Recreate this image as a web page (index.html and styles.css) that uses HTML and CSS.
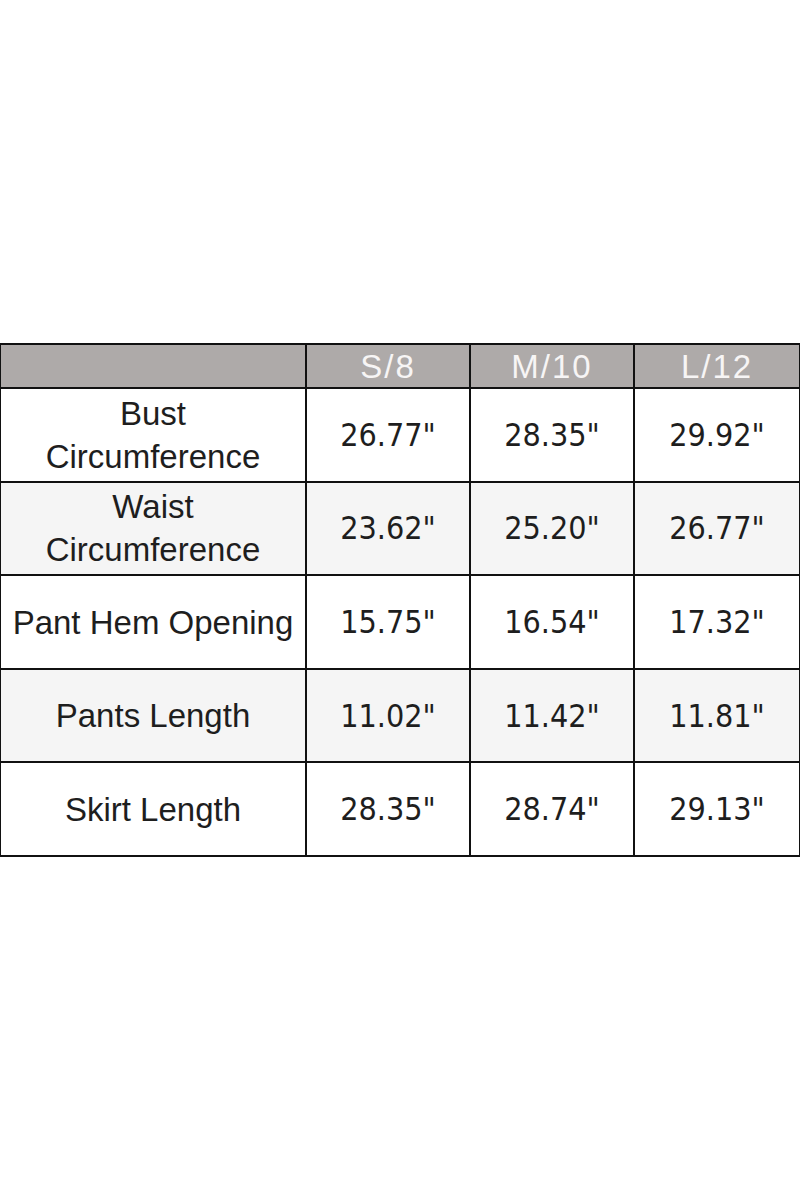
FILE: index.html
```html
<!DOCTYPE html>
<html>
<head>
<meta charset="utf-8">
<link rel="stylesheet" href="styles.css">
</head>
<body>
<div class="page">
  <table class="size-table">
    <colgroup>
      <col class="c-label">
      <col class="c-size">
      <col class="c-size">
      <col class="c-last">
    </colgroup>
    <thead>
      <tr class="head-row">
        <th></th>
        <th>S/8</th>
        <th>M/10</th>
        <th>L/12</th>
      </tr>
    </thead>
    <tbody>
      <tr>
        <td class="label">Bust<br>Circumference</td>
        <td class="num">26.77"</td>
        <td class="num">28.35"</td>
        <td class="num">29.92"</td>
      </tr>
      <tr class="alt">
        <td class="label">Waist<br>Circumference</td>
        <td class="num">23.62"</td>
        <td class="num">25.20"</td>
        <td class="num">26.77"</td>
      </tr>
      <tr>
        <td class="label">Pant Hem Opening</td>
        <td class="num">15.75"</td>
        <td class="num">16.54"</td>
        <td class="num">17.32"</td>
      </tr>
      <tr class="alt">
        <td class="label">Pants Length</td>
        <td class="num">11.02"</td>
        <td class="num">11.42"</td>
        <td class="num">11.81"</td>
      </tr>
      <tr>
        <td class="label">Skirt Length</td>
        <td class="num">28.35"</td>
        <td class="num">28.74"</td>
        <td class="num">29.13"</td>
      </tr>
    </tbody>
  </table>
</div>
</body>
</html>
```

FILE: styles.css
```css
html, body {
  margin: 0;
  padding: 0;
  background: #ffffff;
}

.page {
  width: 800px;
  height: 1200px;
  display: flex;
  align-items: center;
  justify-content: center;
}

.size-table {
  width: 800px;
  table-layout: fixed;
  border-collapse: collapse;
  font-family: "Liberation Sans", Arial, sans-serif;
  color: #1e1e1e;
}

.c-label { width: 306px; }
.c-size { width: 164px; }
.c-last { width: 166px; }

.size-table th,
.size-table td {
  border: 2px solid #111111;
  padding: 0;
  text-align: center;
  vertical-align: middle;
}

.head-row th {
  height: 40px;
  background: #aeaaa9;
  color: #f7f5f5;
  font-family: "Liberation Sans", Arial, sans-serif;
  font-weight: normal;
  font-size: 33px;
  letter-spacing: 2px;
  line-height: 38px;
  padding-top: 2px;
}

.size-table tbody tr {
  height: 93.6px;
  background: #ffffff;
}

.size-table tbody tr.alt {
  background: #f5f5f5;
}

.label {
  font-size: 33px;
  line-height: 43px;
}

.num {
  font-family: "Liberation Sans Narrow", "DejaVu Sans Condensed", sans-serif;
  font-size: 32px;
  line-height: 40px;
}
```
